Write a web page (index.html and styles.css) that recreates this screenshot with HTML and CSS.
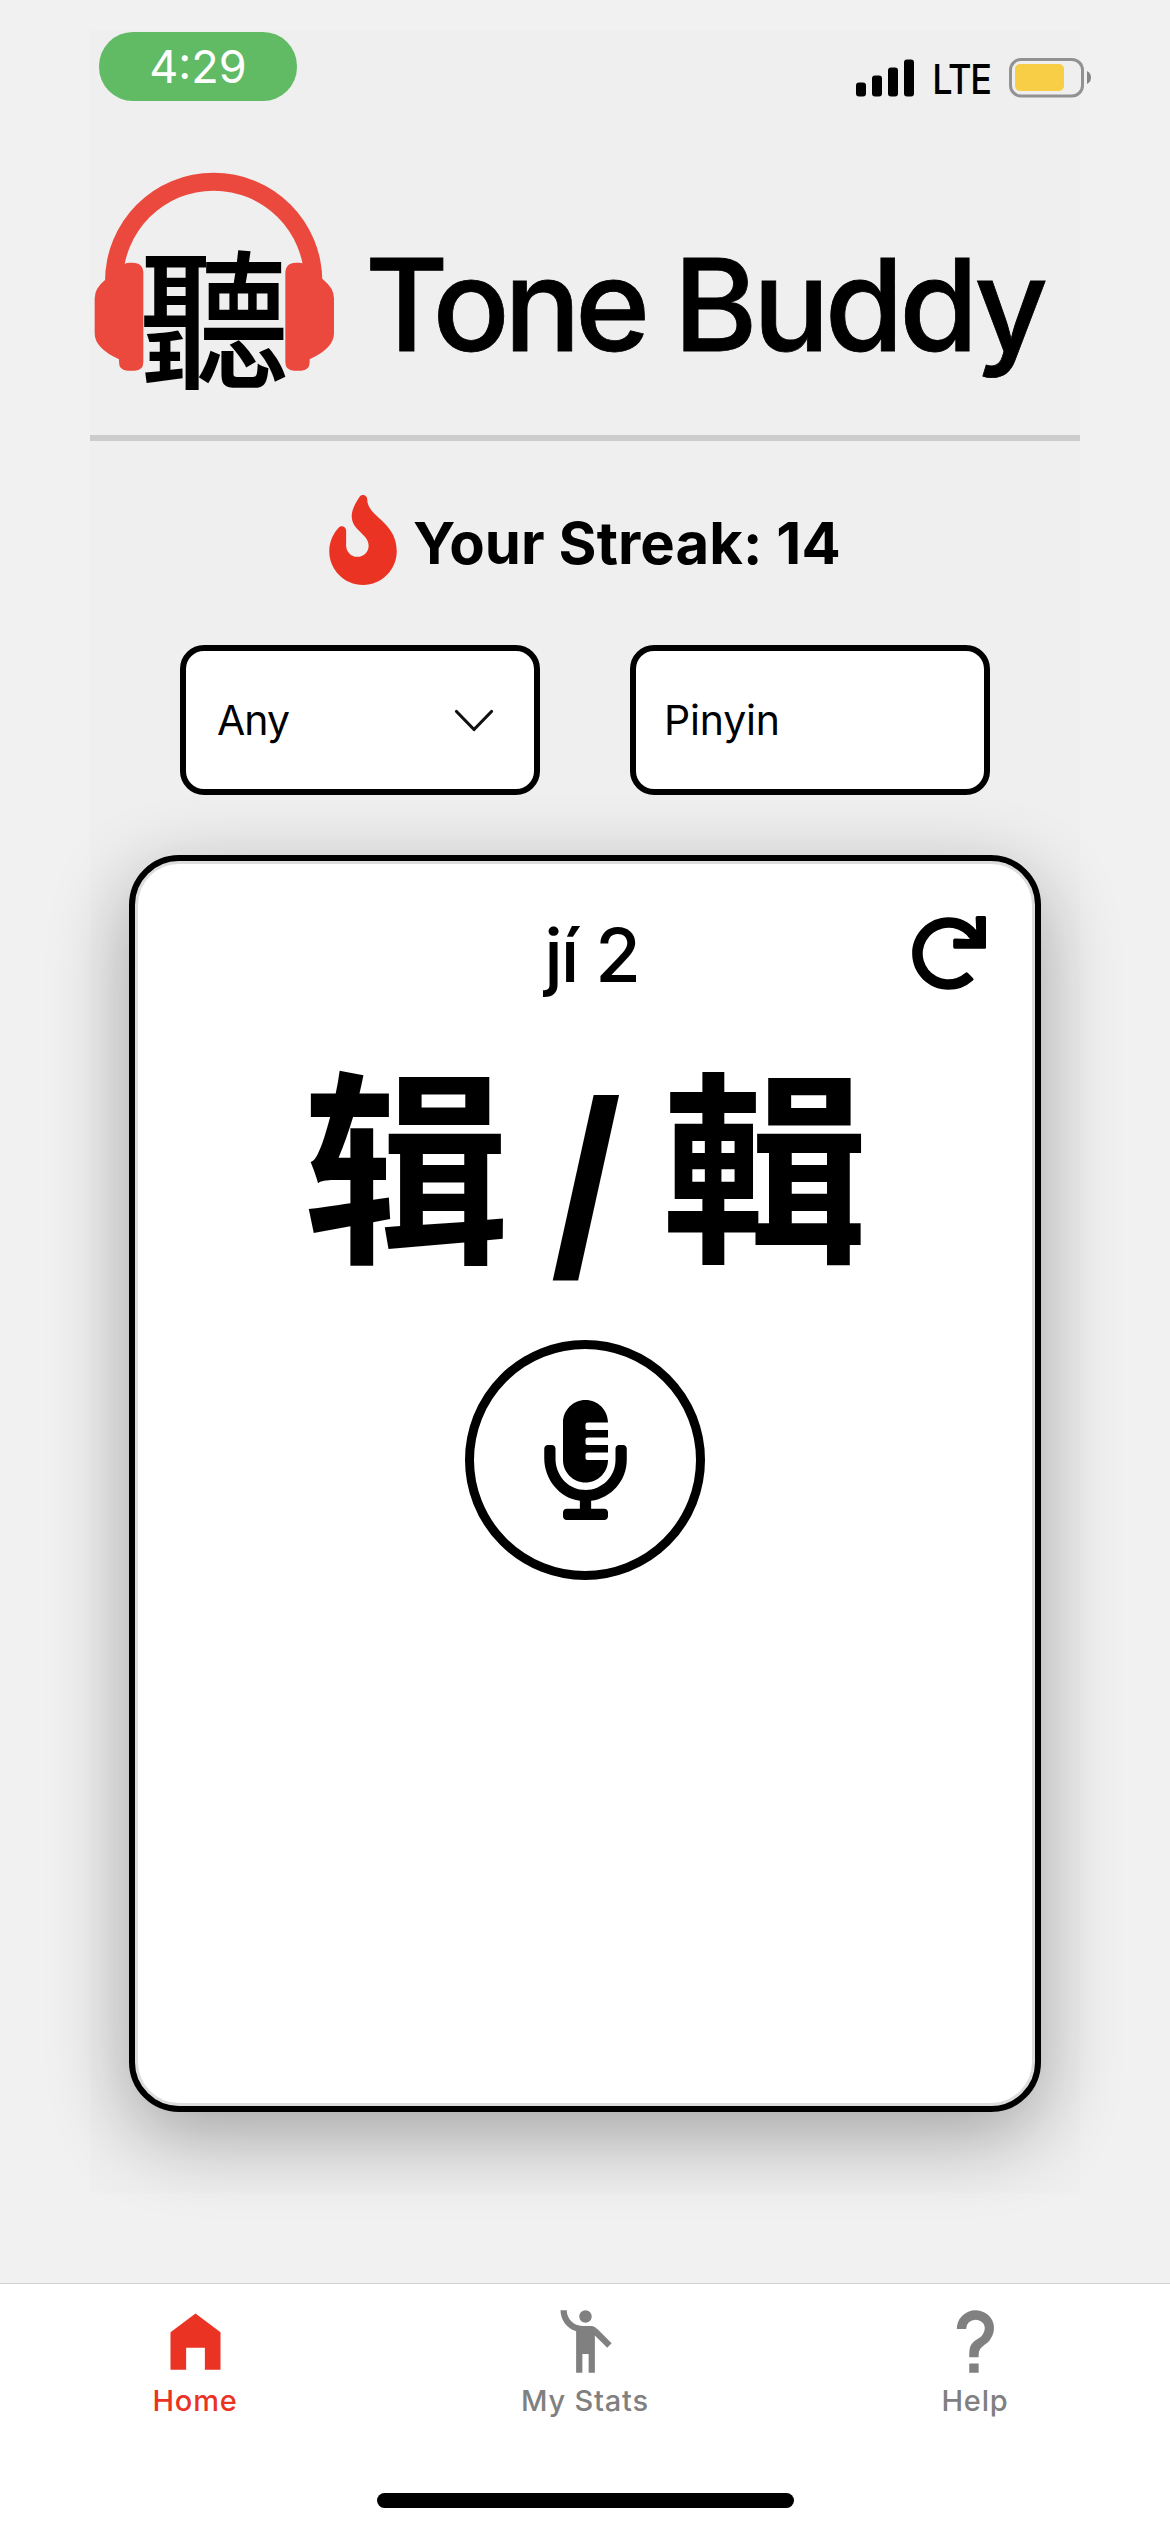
FILE: index.html
```html
<!DOCTYPE html>
<html lang="en">
<head>
<meta charset="utf-8">
<title>Tone Buddy</title>
<link rel="stylesheet" href="styles.css">
</head>
<body>
<div class="screen">
  <main class="content">
    <div class="status-bar">
      <span class="time">4:29</span>
      <div class="status-right">
        <svg class="signal" width="58" height="38" viewBox="0 0 58 38"><rect x="0" y="23.500" width="10" height="14" rx="3"/><rect x="16" y="16.500" width="10" height="21" rx="3"/><rect x="32" y="8.500" width="10" height="29" rx="3"/><rect x="48" y="0.500" width="10" height="37" rx="3"/></svg>
        <span class="network">LTE</span>
        <svg class="battery" width="83" height="40" viewBox="0 0 83 40"><rect x="1.500" y="1.500" width="72" height="36.500" rx="10.500" fill="none" stroke="#929292" stroke-width="3"/><rect x="6" y="6" width="49" height="27" rx="5" fill="#f7ce46"/><path d="M78 13Q82 15 82 19.500T78 26z" fill="#858585"/></svg>
      </div>
    </div>
    <header class="brand">
      <svg class="logo" width="240" height="250" viewBox="42 36 720 750">
        <g fill="#eb493e">
          <path d="M75 364A326 326 0 0 1 727 364H673A272 272 0 0 0 129 364Z"/>
          <path id="cup" d="M75 360L134 312Q140 308 150 308H158Q190 308 190 340V606Q190 632 164 632H143Q117 632 117 606V598Q44 565 44 520V415Q44 385 75 360Z"/>
          <use href="#cup" transform="translate(806 0) scale(-1 1)"/>
        </g>
        <text class="logo-char" x="403" y="650" text-anchor="middle">聽</text>
      </svg>
      <h1 class="title"><span class="first-word">Tone</span> Buddy</h1>
    </header>
    <section class="streak">
      <svg width="68" height="90" viewBox="0 0 384 512"><path fill="#eb3323" d="M216 23.860c0-23.800-30.650-32.770-44.150-13.040C48 191.850 224 200 224 288c0 35.630-29.110 64.460-64.850 63.990-35.170-.45-63.150-29.770-63.150-64.940v-85.510c0-21.700-26.470-32.230-41.430-16.500C27.800 213.160 0 261.330 0 320c0 105.870 86.130 192 192 192s192-86.130 192-192c0-170.290-168-193-168-296.140z"/></svg>
      <span class="streak-text">Your Streak: 14</span>
    </section>
    <section class="filters">
      <div class="field select"><span>Any</span><svg class="chevron" width="40" height="24" viewBox="0 0 40 24"><path d="M2.500 2.500L20 20.500L37.500 2.500" fill="none" stroke="#111" stroke-width="3.200" stroke-linecap="round" stroke-linejoin="round"/></svg></div>
      <div class="field input"><span>Pinyin</span></div>
    </section>
    <section class="card">
      <div class="card-head">
        <span class="reading">jí 2</span>
        <svg class="redo" width="75" height="75" viewBox="0 0 512 512"><path d="M500.330 0h-47.410a12 12 0 0 0-12 12.570l4 82.760A247.420 247.420 0 0 0 256 8C119.340 8 7.900 119.530 8 256.190 8.100 393.070 119.100 504 256 504a247.100 247.100 0 0 0 166.180-63.910 12 12 0 0 0 .48-17.430l-34-34a12 12 0 0 0-16.380-.55A176 176 0 1 1 402.100 157.800l-101.530-4.870a12 12 0 0 0-12.570 12v47.410a12 12 0 0 0 12 12h200.330a12 12 0 0 0 12-12V12a12 12 0 0 0-12-12z"/></svg>
      </div>
      <div class="hanzi"><span class="simplified">辑</span><span class="slash">/</span><span class="traditional">輯</span></div>
      <div class="mic">
        <svg width="83" height="120" viewBox="0 0 352 512"><path d="M336 192h-16c-8.840 0-16 7.160-16 16v48c0 74.800-64.490 134.820-140.790 127.380C96.710 376.890 48 317.110 48 250.300V208c0-8.840-7.160-16-16-16H16c-8.840 0-16 7.160-16 16v40.160c0 89.640 63.970 169.550 152 181.690V464H96c-8.840 0-16 7.160-16 16v16c0 8.840 7.160 16 16 16h160c8.840 0 16-7.160 16-16v-16c0-8.840-7.160-16-16-16h-56v-33.770C285.710 418.470 352 344.900 352 256v-48c0-8.840-7.160-16-16-16zM176 352c53.020 0 96-42.980 96-96h-85.330c-5.890 0-10.670-3.580-10.670-8v-16c0-4.420 4.780-8 10.670-8H272v-32h-85.330c-5.890 0-10.670-3.580-10.670-8v-16c0-4.420 4.780-8 10.670-8H272v-32h-85.330c-5.890 0-10.670-3.580-10.670-8v-16c0-4.420 4.780-8 10.670-8H272c0-53.020-42.980-96-96-96S80 42.980 80 96v160c0 53.020 42.980 96 96 96z"/></svg>
      </div>
    </section>
  </main>
  <nav class="tabs">
    <div class="tab-row">
      <div class="tab active"><svg width="75" height="75" viewBox="0 0 24 24"><path d="M4 21V9l8-6 8 6v12h-5v-7H9v7z"/></svg><span>Home</span></div>
      <div class="tab"><svg width="75" height="75" viewBox="0 0 24 24"><circle cx="12" cy="4" r="2"/><path d="M15.890 8.110C15.500 7.720 14.830 7 13.530 7h-2.540C8.240 6.990 6 4.750 6 2H4c0 3.160 2.110 5.840 5 6.710V22h2v-6h2v6h2V10.050L18.950 14l1.410-1.410-4.470-4.480z"/></svg><span>My Stats</span></div>
      <div class="tab"><svg width="75" height="75" viewBox="0 0 24 24"><path d="M10 19h3v3h-3zM12 2c5.350.22 7.680 5.620 4.500 9.670-.83 1-2.170 1.660-2.830 2.500C13 15 13 16 13 17h-3c0-1.670 0-3.080.67-4.080.66-1 2-1.590 2.830-2.250C15.920 8.430 15.320 5.260 12 5a3 3 0 0 0-3 3H6a6 6 0 0 1 6-6z"/></svg><span>Help</span></div>
    </div>
    <div class="home-indicator"></div>
  </nav>
</div>
</body>
</html>
```

FILE: styles.css
```css
* { box-sizing: border-box; }
body { margin: 0; background: #f1f1f1; font-family: Inter, "Noto Sans CJK SC", sans-serif; color: #000; }
svg { display: block; flex: none; }
.screen { width: 1170px; height: 2532px; display: flex; flex-direction: column; justify-content: space-between; overflow: hidden; }
.content { width: 990px; height: 2163px; margin: 30px 90px 0; background: #efefef; display: flex; flex-direction: column; }

.status-bar { height: 71px; margin: 0 -12px 0 9px; padding-top: 2px; display: flex; justify-content: space-between; align-items: flex-start; }
.time { width: 198px; height: 69px; border-radius: 34px; background: #61ba64; color: #fff; font-size: 45px; line-height: 70px; text-align: center; }
.status-right { display: flex; align-items: center; height: 40px; margin-top: 26px; }
.network { width: 95px; text-align: center; font-size: 41px; line-height: 40px; font-weight: 500; margin-top: 1px; letter-spacing: -1.5px; transform: scaleX(.88); }

.brand { height: 340px; border-bottom: 6px solid #ccc; padding: 71px 0 0 4px; display: flex; gap: 31px; align-items: flex-start; }
.logo-char { font-family: "Noto Sans CJK TC", sans-serif; font-weight: 500; font-size: 450px; }
.title { margin: 55px 0 0; font-size: 128px; line-height: 155px; font-weight: 500; letter-spacing: -4.8px; -webkit-text-stroke: .8px #000; white-space: nowrap; }
.first-word { letter-spacing: -6px; }

.streak { height: 90px; margin: 54px 0 60px 239px; display: flex; gap: 16px; align-items: center; }
.streak-text { margin-top: 6px; font-size: 58px; line-height: 70px; font-weight: 700; letter-spacing: .1px; white-space: nowrap; }

.filters { display: grid; grid-template-columns: 360px 360px; gap: 90px; justify-content: center; }
.field { height: 150px; border: 6px solid #000; border-radius: 24px; background: #fff; display: flex; align-items: center; justify-content: space-between; font-size: 41px; line-height: 50px; letter-spacing: -1px; }
.select { padding: 0 40px 1px 31px; }
.chevron { margin-top: 3px; }
.input { padding: 0 28px; letter-spacing: -.2px; }

.card { width: 912px; height: 1257px; margin: 60px 0 0 39px; border: 6px solid #000; border-radius: 50px; background: #fff; display: flex; flex-direction: column; align-items: center; box-shadow: inset 0 0 0 3px #ddd, 0 24px 80px rgba(0, 0, 0, .32); }
.card-head { width: 100%; height: 130px; display: grid; grid-template-columns: 1fr auto 1fr; align-items: start; padding: 55px 49px 0; }
.reading { grid-column: 2; font-size: 74px; line-height: 78px; font-weight: 500; letter-spacing: -2px; padding-left: 13px; }
.redo { justify-self: end; }
.hanzi { margin-top: 39px; height: 254px; display: flex; justify-content: center; font-size: 205px; line-height: 254px; font-weight: 700; }
.traditional { font-family: "Noto Sans CJK TC", sans-serif; }
.simplified { font-family: "Noto Sans CJK SC", sans-serif; font-size: 207px; }
.slash { width: 152px; text-align: center; font-size: 213px; font-weight: 800; line-height: 300px; transform: scaleX(.82); }
.mic { width: 240px; height: 240px; margin-top: 56px; border: 9px solid #000; border-radius: 50%; display: flex; align-items: center; justify-content: center; }

.tabs { height: 249px; border-top: 1px solid #d2d2d2; background: #fff; padding: 20px 0 24px; display: flex; flex-direction: column; justify-content: space-between; align-items: center; }
.tab-row { width: 100%; display: grid; grid-template-columns: repeat(3, 1fr); }
.tab { display: flex; flex-direction: column; align-items: center; gap: 4px; color: #808080; fill: currentColor; font-size: 29px; line-height: 36px; font-weight: 500; letter-spacing: .8px; }
.active { color: #eb3323; }
.home-indicator { width: 417px; height: 15px; border-radius: 8px; background: #000; }
```
